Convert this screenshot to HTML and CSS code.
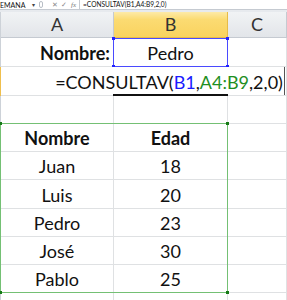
FILE: index.html
```html
<!DOCTYPE html>
<html>
<head>
<meta charset="utf-8">
<link rel="stylesheet" href="styles.css">
</head>
<body>
<div class="app">
  <div class="fbar">
    <div class="namebox"><span class="nb-text">EMANA</span><span class="nb-arrow">▾</span></div>
    <div class="tools"><span class="grip"></span><span class="t-x">✕</span><span class="t-ok">✓</span><span class="t-fx">fx</span></div>
    <div class="finput">=CONSULTAV(B1,A4:B9,2,0)</div>
  </div>
  <div class="gap"></div>
  <div class="sheet">
    <div class="row head h26"><div class="rh"></div><div class="ch">A</div><div class="ch sel">B</div><div class="ch">C</div></div>
    <div class="row h29"><div class="rh"></div><div class="cell right bold">Nombre:</div><div class="cell">Pedro</div><div class="cell"></div></div>
    <div class="row h29"><div class="rh act"></div><div class="cell"></div><div class="cell"></div><div class="cell"></div></div>
    <div class="row h28"><div class="rh"></div><div class="cell"></div><div class="cell"></div><div class="cell"></div></div>
    <div class="row h28"><div class="rh"></div><div class="cell bold">Nombre</div><div class="cell bold">Edad</div><div class="cell"></div></div>
    <div class="row h28"><div class="rh"></div><div class="cell">Juan</div><div class="cell">18</div><div class="cell"></div></div>
    <div class="row h29"><div class="rh"></div><div class="cell">Luis</div><div class="cell">20</div><div class="cell"></div></div>
    <div class="row h28"><div class="rh"></div><div class="cell">Pedro</div><div class="cell">23</div><div class="cell"></div></div>
    <div class="row h28"><div class="rh"></div><div class="cell">José</div><div class="cell">30</div><div class="cell"></div></div>
    <div class="row h28"><div class="rh"></div><div class="cell">Pablo</div><div class="cell">25</div><div class="cell"></div></div>
    <div class="row h28"><div class="rh"></div><div class="cell"></div><div class="cell"></div><div class="cell"></div></div>
  </div>

  <div class="ref ref-blue"><i class="k tl"></i><i class="k tr"></i><i class="k bl"></i><i class="k br"></i></div>
  <div class="ref ref-green"><i class="k tl"></i><i class="k tr"></i><i class="k bl"></i><i class="k br"></i></div>
  <div class="editbox">=CONSULTAV(<span class="fb">B1</span>,<span class="fg">A4:B9</span>,2,0)</div>
  <div class="activeline"></div>
</div>
</body>
</html>
```
FILE: styles.css
```css
html, body {
  margin: 0;
  padding: 0;
  background: #ffffff;
}
.app {
  position: relative;
  width: 287px;
  height: 300px;
  overflow: hidden;
  font-family: Lato, "Open Sans", sans-serif;
}
.fbar {
  display: flex;
  height: 10px;
  background: #ffffff;
  border-bottom: 1px solid #c5cad1;
  box-sizing: border-box;
}
.namebox {
  width: 37px;
  display: flex;
  align-items: center;
  justify-content: space-between;
  padding-right: 2px;
  box-sizing: border-box;
  font-size: 7px;
  color: #111;
}
.nb-text { line-height: 8px; }
.nb-arrow { font-size: 6px; color: #444; }
.tools {
  width: 42px;
  display: flex;
  align-items: center;
  font-size: 7px;
  color: #777;
  background: #ffffff;
}
.grip {
  width: 4px;
  height: 7px;
  border: 1px solid #b8bec6;
  border-radius: 4px;
  margin-left: 2px;
  margin-right: 9px;
  box-sizing: border-box;
}
.t-x { margin-right: 3px; color: #888; }
.t-ok { margin-right: 4px; color: #888; }
.t-fx { font-style: italic; font-family: "Liberation Serif", serif; font-size: 7px; color: #777; }
.finput {
  flex: 1;
  border-left: 1px solid #c5cad1;
  padding-left: 3px;
  font-size: 6.6px;
  line-height: 9px;
  color: #111;
}
.gap {
  height: 2px;
  background: #e7eaee;
}
.sheet {
  display: flex;
  flex-direction: column;
}
.row {
  display: grid;
  grid-template-columns: 1px 113px 114px 1fr;
}
.h26 { height: 26px; }
.h28 { height: 28px; }
.h29 { height: 29px; }
.rh { background: #cdd2d8; }
.rh.act { background: #efbf4d; }
.head .rh { background: #cdd2d8; }
.ch {
  display: flex;
  align-items: flex-end;
  justify-content: center;
  padding-bottom: 3px;
  box-sizing: border-box;
  background: linear-gradient(#f1f3f5, #e2e5e9);
  border-right: 1px solid #c5cad1;
  border-bottom: 1px solid #c5cad1;
  font-size: 18px;
  line-height: 20px;
  color: #333;
}
.ch.sel {
  background: linear-gradient(#fdeaa8 0%, #fbdb72 30%, #f9d35f 100%);
  border-right: 1px solid #e6bb48;
  border-bottom: 1px solid #e6bb48;
}
.cell {
  display: flex;
  align-items: flex-end;
  justify-content: center;
  padding-bottom: 3px;
  box-sizing: border-box;
  border-right: 1px solid #dfe1e3;
  border-bottom: 1px solid #dfe1e3;
  font-size: 18px;
  line-height: 20px;
  color: #111;
}
.cell.right { justify-content: flex-end; padding-right: 3px; }
.cell.bold { font-weight: 700; }

.ref {
  position: absolute;
  box-sizing: border-box;
}
.ref-blue {
  left: 113px;
  top: 38px;
  width: 115px;
  height: 29px;
  border: 1px solid #4a4aff;
}
.ref-blue .k { background: #2222ff; }
.ref-green {
  left: 0px;
  top: 123px;
  width: 228px;
  height: 170px;
  border: 1px solid #74c074;
}
.ref-green .k { background: #167a16; }
.k {
  position: absolute;
  width: 3px;
  height: 3px;
}
.tl { left: -2px; top: -2px; }
.tr { right: -2px; top: -2px; }
.bl { left: -2px; bottom: -2px; }
.br { right: -2px; bottom: -2px; }

.editbox {
  position: absolute;
  left: 54px;
  top: 67px;
  width: 231px;
  height: 28px;
  background: #ffffff;
  border-right: 1px solid #555;
  box-sizing: border-box;
  display: flex;
  align-items: flex-end;
  justify-content: center;
  padding-bottom: 3px;
  font-size: 18px;
  line-height: 20px;
  color: #111;
  white-space: nowrap;
}
.fb { color: #1a1aff; }
.fg { color: #1f8f1f; }
.activeline {
  position: absolute;
  left: 113px;
  top: 94px;
  width: 115px;
  height: 2px;
  background: #111;
}
```
